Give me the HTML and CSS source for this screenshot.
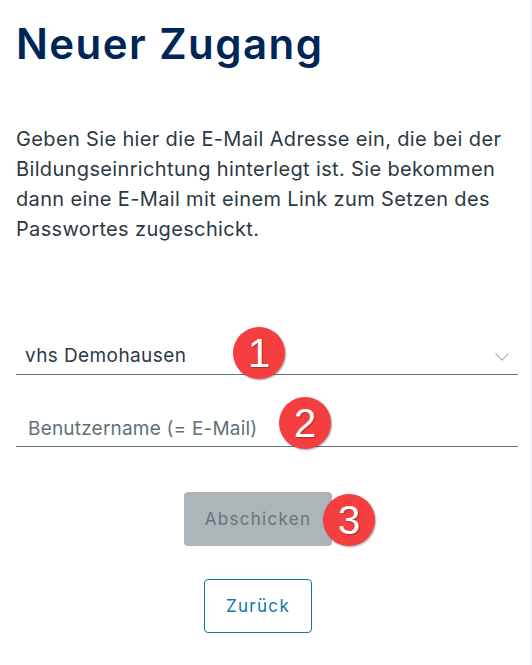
FILE: index.html
```html
<!DOCTYPE html>
<html lang="de">
<head>
<meta charset="utf-8">
<title>Neuer Zugang</title>
<link rel="stylesheet" href="styles.css">
</head>
<body>
<main class="page">
  <h1 class="title">Neuer Zugang</h1>
  <p class="intro">Geben Sie hier die E-Mail Adresse ein, die bei der<br>Bildungseinrichtung hinterlegt ist. Sie bekommen<br>dann eine E-Mail mit einem Link zum Setzen des<br>Passwortes zugeschickt.</p>
  <form class="form">
    <div class="field field-select">
      <span class="value">vhs Demohausen</span>
      <svg class="chevron" width="16" height="10" viewBox="0 0 16 10" aria-hidden="true"><path d="M1.5 1.5 8 8l6.5-6.5" fill="none" stroke="#b4bcc0" stroke-width="1.4"/></svg>
      <span class="badge badge-1">1</span>
    </div>
    <div class="field field-input">
      <span class="placeholder">Benutzername (= E-Mail)</span>
      <span class="badge badge-2">2</span>
    </div>
    <div class="actions">
      <div class="submit-wrap">
        <button type="button" class="btn btn-disabled">Abschicken</button>
        <span class="badge badge-3">3</span>
      </div>
      <button type="button" class="btn btn-outline">Zurück</button>
    </div>
  </form>
</main>
</body>
</html>
```
FILE: styles.css
```css
* { box-sizing: border-box; }
html, body { margin: 0; height: 100%; background: #fff; }
body { font-family: "Inter", "Open Sans", sans-serif; overflow: hidden; }
.page { width: 532px; height: 665px; padding: 0 12px 0 16px; border-right: 2px solid #f3f6f9; }
.title { margin: 0; padding-top: 16px; font-size: 42px; line-height: 56px; font-weight: 600; color: #002657; letter-spacing: 1.45px; }
.intro { margin: 52px 0 0; font-size: 20px; line-height: 30px; color: #2b3a42; font-weight: 400; letter-spacing: 0.35px; }
.form { margin-top: 93px; }
.field { position: relative; display: flex; align-items: center; border-bottom: 1px solid #62767f; }
.field-select { height: 38px; padding: 0 8px 0 9px; justify-content: space-between; }
.value { font-size: 19px; color: #2b3a42; letter-spacing: 0.4px; }
.chevron { margin-top: 2px; }
.field-input { height: 38px; margin-top: 34px; padding: 0 12px; }
.placeholder { font-size: 19px; color: #5f7079; padding-top: 2px; letter-spacing: 0.2px; }
.badge { position: absolute; width: 52px; height: 52px; border-radius: 50%; background: #f43e3f; color: #fff; display: flex; align-items: center; justify-content: center; font-family: "Liberation Sans", sans-serif; font-size: 40px; line-height: 1; box-shadow: 1px 1px 2px rgba(0,0,0,.35); text-shadow: 1px 1px 1px rgba(0,0,0,.3); }
.badge-1 { left: 217px; top: -10px; }
.badge-2 { left: 263px; top: -12px; }
.badge-3 { left: 139px; top: 2px; }
.actions { display: flex; flex-direction: column; align-items: center; margin-top: 45px; padding-right: 18px; }
.submit-wrap { position: relative; }
.btn { display: block; font-family: inherit; font-size: 17px; font-weight: 400; letter-spacing: 1.3px; border-radius: 4px; padding: 0; }
.btn-disabled { width: 148px; height: 54px; background: #adb5b9; border: 0; color: #667479; }
.btn-outline { width: 108px; height: 54px; margin-top: 33px; background: #fff; border: 1px solid #0f76a8; color: #0f76a8; }
```
